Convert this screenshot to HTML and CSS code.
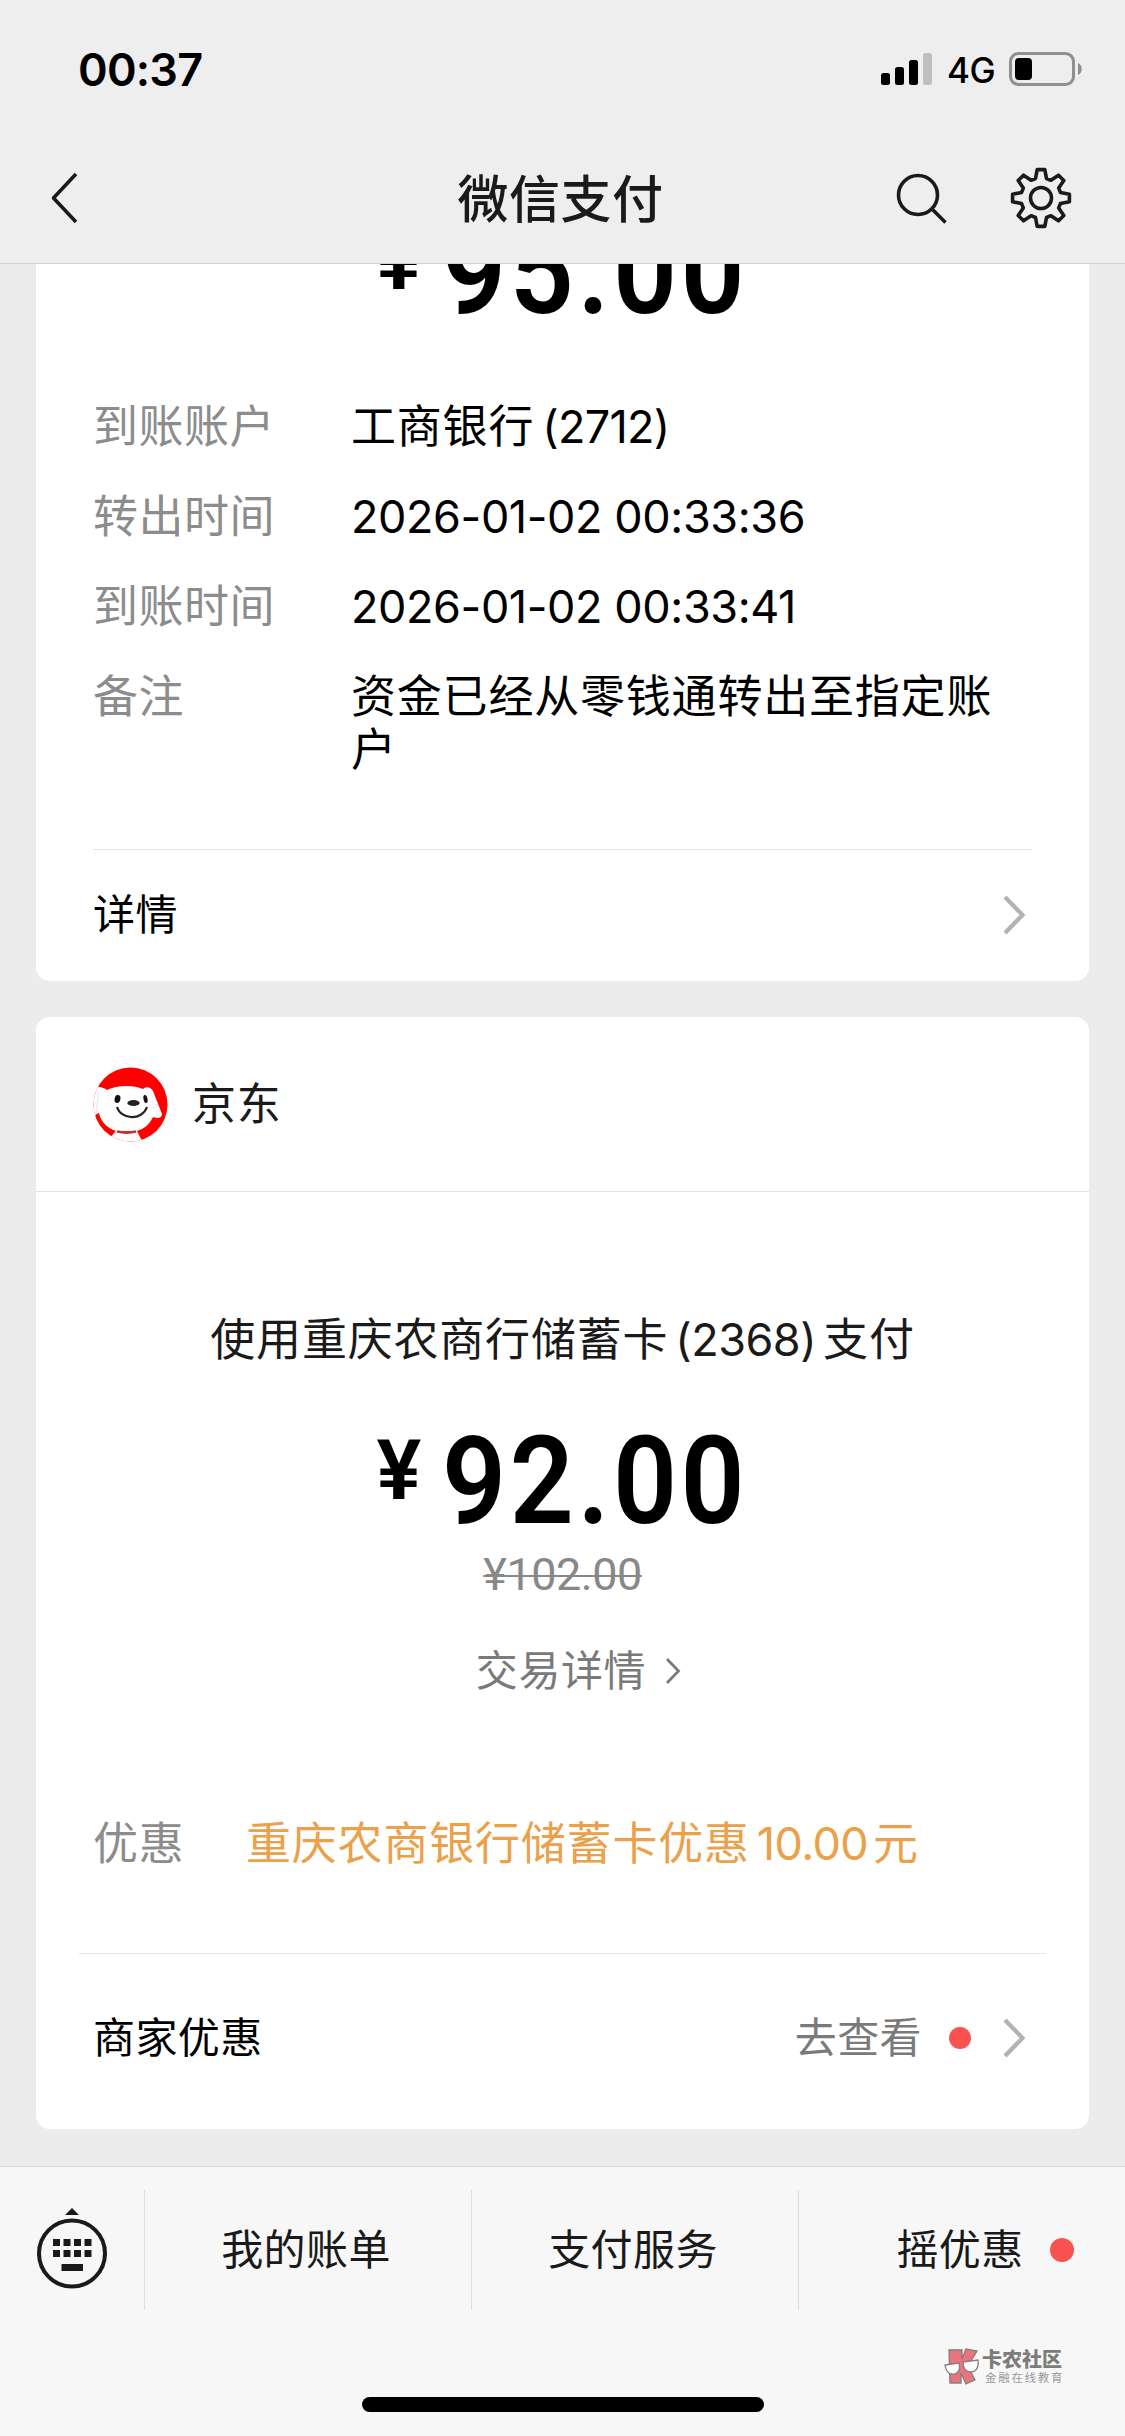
FILE: index.html
```html
<!DOCTYPE html>
<html lang="zh-CN">
<head>
<meta charset="utf-8">
<title>微信支付</title>
<link rel="stylesheet" href="styles.css">
</head>
<body>
<header class="header">
  <div class="status">
    <span class="time">00:37</span>
    <div class="status-icons">
      <svg class="signal" width="52" height="34" viewBox="0 0 52 34"><rect x="0" y="21" width="9" height="12" rx="2.5"/><rect x="14" y="15" width="9" height="18" rx="2.5"/><rect x="28" y="8" width="9" height="25" rx="2.5"/><rect x="42" y="1" width="9" height="32" rx="2.5" fill="#bfbfbf"/></svg>
      <span class="network">4G</span>
      <svg class="battery" width="74" height="34" viewBox="0 0 74 34"><rect x="1.5" y="1.5" width="63" height="31" rx="8" fill="none" stroke="#8f8f8f" stroke-width="3"/><rect x="6" y="6" width="17" height="22" rx="4"/><path d="M69 11c5 2 5 10 0 12z" fill="#8f8f8f"/></svg>
    </div>
  </div>
  <div class="nav">
    <svg class="back" width="30" height="52" viewBox="0 0 30 52"><path d="M27 2L4.500 26L27 50"/></svg>
    <h1 class="title">微信支付</h1>
    <div class="nav-actions">
      <svg width="52" height="62" viewBox="0 0 52 62"><circle cx="22" cy="28" r="19.500"/><path d="M36 42L49.500 55.500"/></svg>
      <svg width="62" height="62" viewBox="-31 -31 62 62"><path d="M-5.500-19.500L-3.800-28.400H3.800L5.500-19.500L9.900-17.700L17.500-22.800L22.800-17.500L17.700-9.900L19.500-5.500L28.400-3.800V3.800L19.500 5.500L17.700 9.900L22.800 17.500L17.500 22.800L9.900 17.700L5.500 19.500L3.800 28.400H-3.800L-5.500 19.500L-9.900 17.700L-17.500 22.800L-22.800 17.500L-17.700 9.900L-19.500 5.500L-28.400 3.800V-3.800L-19.500-5.500L-17.700-9.900L-22.800-17.500L-17.500-22.800L-9.900-17.700Z"/><circle r="10.500"/></svg>
    </div>
  </div>
</header>

<main class="feed">
  <section class="card card-transfer">
    <div class="amount"><span class="yen">¥</span><span class="digits">95.00</span></div>
    <dl class="fields">
      <dt>到账账户</dt><dd>工商银行<span class="num bank-no">(2712)</span></dd>
      <dt>转出时间</dt><dd class="num">2026-01-02 00:33:36</dd>
      <dt>到账时间</dt><dd class="num">2026-01-02 00:33:41</dd>
      <dt>备注</dt><dd>资金已经从零钱通转出至指定账户</dd>
    </dl>
    <div class="link-row detail-row">
      <span>详情</span>
      <svg class="chevron" width="24" height="42" viewBox="0 0 24 42"><path d="M3 3L20.500 21L3 39"/></svg>
    </div>
  </section>

  <section class="card card-pay">
    <div class="merchant">
      <svg width="75" height="75" viewBox="0 0 75 75">
        <defs><clipPath id="disc"><circle cx="37.500" cy="37.500" r="37"/></clipPath></defs>
        <g clip-path="url(#disc)">
          <rect width="75" height="75" fill="#f00"/>
          <path fill="#fff" d="M-1 23C4 18 10 20 14 23C24 18 40 18 50 22C53 19 58 20 60 24L69 47C69 51 65 52 60 50C57 57 51 62 44 64L51 78H13V75L23 64C14 61 8 55 6 46C3 47 1 49 -1 51Z"/>
        </g>
        <path d="M4 24C8 28 2 34 4 46" fill="none" stroke="#eee" stroke-width="1.500"/>
        <ellipse cx="24.500" cy="32" rx="2.900" ry="4" fill="#111" transform="rotate(12 24.500 32)"/>
        <ellipse cx="52.500" cy="32" rx="2" ry="4" fill="#111" transform="rotate(-12 52.500 32)"/>
        <ellipse cx="40.500" cy="36" rx="6.200" ry="3" fill="#222"/>
        <path d="M24 40C28 53 49 54 54 40" fill="none" stroke="#222" stroke-width="2.200"/>
        <path d="M24 64.500Q34 66.500 43 64.500" fill="none" stroke="#c4302b" stroke-width="2.800"/>
      </svg>
      <span>京东</span>
    </div>
    <div class="payment">
      <p class="method">使用重庆农商行储蓄卡<span class="num card-no">(2368)</span>支付</p>
      <div class="amount"><span class="yen">¥</span><span class="digits">92.00</span></div>
      <p class="original">¥102.00</p>
      <p class="more"><span>交易详情</span><svg width="18" height="28" viewBox="0 0 18 28"><path d="M3 2L14.500 14L3 26"/></svg></p>
    </div>
    <div class="discount"><span class="label">优惠</span><span class="promo">重庆农商银行储蓄卡优惠<span class="num sum">10.00</span>元</span></div>
    <div class="link-row offers-row">
      <span>商家优惠</span>
      <div class="view"><span>去查看</span><i class="dot"></i>
      <svg class="chevron" width="24" height="42" viewBox="0 0 24 42"><path d="M3 3L20.500 21L3 39"/></svg></div>
    </div>
  </section>
</main>

<footer class="bar">
  <nav class="menu">
    <div class="keyboard"><svg width="72" height="84" viewBox="0 0 72 84"><path d="M36 1L43 8H29Z"/><circle cx="36" cy="46.500" r="33" fill="none" stroke="#1a1a1a" stroke-width="4"/><path d="M17 32h7v7h-7zM27.500 32h7v7h-7zM38 32h7v7h-7zM48.500 32h7v7h-7zM17 43h7v7h-7zM27.500 43h7v7h-7zM38 43h7v7h-7zM48.500 43h7v7h-7zM25.500 57h21.500v7H25.500z"/></svg></div>
    <a class="item">我的账单</a>
    <a class="item">支付服务</a>
    <a class="item">摇优惠<i class="dot badge"></i></a>
  </nav>
  <div class="home"></div>
  <div class="brand">
    <svg width="36" height="37" viewBox="0 0 36 37"><g stroke="#8b7c7e" stroke-width="1.300"><path fill="#e9747c" d="M5 2H18V11L22 1L33 3L24 18L31 32L22 36L17 25V35H6Z"/><path fill="#fff" d="M1 17L15 15C17 24 12 27 8 26C4 26 2 23 1 17ZM19 14L34 12C35 21 31 24 27 24C22 24 19 21 19 14Z"/></g></svg>
    <div class="brand-text"><strong>卡农社区</strong><small>金融在线教育</small></div>
  </div>
</footer>
</body>
</html>
```
FILE: styles.css
```css
* { box-sizing: border-box; margin: 0; padding: 0; }
body {
  width: 1125px; height: 2436px; overflow: hidden;
  display: flex; flex-direction: column;
  background: #ececec; color: #000;
  font-family: Inter, "Noto Sans CJK SC", sans-serif;
  font-size: 45px; letter-spacing: .8px;
}
svg { display: block; flex: none; }

.header {
  flex: none; height: 264px; background: #eee; border-bottom: 1px solid #d4d4d4;
  display: flex; flex-direction: column;
}
.status { height: 138px; display: flex; justify-content: space-between; align-items: center; padding: 0 42px 0 78px; }
.time { font-size: 45px; font-weight: 600; letter-spacing: -.8px; }
.status-icons { display: flex; align-items: center; }
.network { font-size: 35px; font-weight: 450; letter-spacing: -.6px; margin: 2px 14px 0 14px; line-height: 36px; }
.nav {
  height: 120px; display: grid; grid-template-columns: 1fr auto 1fr; align-items: center;
  padding: 0 53px 0 49px;
}
.nav svg { fill: none; stroke: #1a1a1a; stroke-width: 3.6; stroke-linejoin: round; }
.title { font-size: 51px; font-weight: 500; color: #1a1a1a; letter-spacing: .5px; line-height: 60px; padding-top: 4px; }
.nav-actions { display: flex; gap: 62px; justify-content: flex-end; }

.feed { flex: none; height: 1902px; padding: 0 36px; overflow: hidden; display: flex; flex-direction: column; gap: 36px; }
.card { background: #fff; flex: none; }
.card-transfer { height: 717px; border-radius: 0 0 14px 14px; overflow: hidden; }
.card-pay { height: 1112px; border-radius: 14px; }

.amount {
  display: flex; justify-content: center; align-items: flex-start;
  font-family: Roboto, sans-serif; font-weight: 500; height: 124px; line-height: 124px; letter-spacing: 0;
}
.yen { font-size: 84px; line-height: 102px; font-weight: 600; margin-right: 21px; }
.digits { font-size: 122px; letter-spacing: 3.9px; transform: scaleX(.92); transform-origin: left; margin-right: -27px; font-weight: 600; }
.card-transfer .amount { margin-top: -54px; }

.fields {
  display: grid; grid-template-columns: 258px 1fr; row-gap: 37px;
  line-height: 53px; margin: 66px 57px 0; padding-bottom: 73px; border-bottom: 1px solid #e5e5e5;
}
.fields dt { color: #8c8c8c; letter-spacing: .5px; }
.num { letter-spacing: -.4px; }
.bank-no { margin-left: 8px; letter-spacing: -.7px; }

.link-row { display: flex; justify-content: space-between; align-items: center; font-size: 42px; line-height: 50px; letter-spacing: .4px; }
.detail-row { height: 130px; padding: 0 63px 0 57px; }
.chevron { fill: none; stroke: #b2b2b2; stroke-width: 4.2; }

.merchant { height: 175px; padding: 0 57px; display: flex; align-items: center; gap: 24px; border-bottom: 1px solid #e5e5e5; font-size: 44px; line-height: 50px; color: #1a1a1a; }
.payment { display: flex; flex-direction: column; align-items: center; padding-top: 121px; }
.method { line-height: 53px; color: #1a1a1a; white-space: nowrap; }
.card-no { margin: 0 7px; letter-spacing: -.5px; }
.card-pay .amount { margin-top: 54px; }
.original { font-family: Roboto, sans-serif; font-size: 45px; line-height: 52px; letter-spacing: -.5px; color: #888; text-decoration: line-through; text-decoration-thickness: 2px; margin-top: 5px; }
.more { display: flex; align-items: center; gap: 18px; font-size: 42px; line-height: 50px; letter-spacing: .6px; color: #7a7a7a; margin: 45px 0 0 33px; }
.more svg { fill: none; stroke: #7a7a7a; stroke-width: 2.8; }
.discount { display: flex; margin: 121px 43px 0; padding: 0 14px 83px; line-height: 53px; border-bottom: 1px solid #e5e5e5; white-space: nowrap; }
.label { width: 153px; color: #8c8c8c; }
.promo { color: #eba04a; }
.sum { margin: 0 5px 0 7px; letter-spacing: -.6px; }
.offers-row { height: 168px; padding: 0 63px 0 57px; }
.view { display: flex; align-items: center; color: #7a7a7a; }
.dot { display: block; width: 22px; height: 22px; border-radius: 50%; background: #fa5151; margin: 0 31px 0 27px; }

.bar { flex: none; height: 270px; background: #f7f7f7; border-top: 1px solid #d9d9d9; position: relative; display: flex; flex-direction: column; align-items: center; }
.menu { width: 100%; height: 120px; margin-top: 23px; display: grid; grid-template-columns: 144px 327px 327px 327px; font-size: 42px; line-height: 50px; letter-spacing: .4px; color: #1a1a1a; }
.keyboard { display: flex; align-items: center; justify-content: center; fill: #1a1a1a; }
.keyboard svg { margin-bottom: 3px; }
.item { border-left: 1px solid #dcdcdc; display: flex; align-items: center; justify-content: center; position: relative; padding: 0 4px 0 0; }
.badge { position: absolute; left: 251px; top: 48px; width: 24px; height: 24px; margin: 0; }
.home { width: 402px; height: 15px; border-radius: 8px; background: #000; margin-top: 87px; }
.brand { position: absolute; left: 944px; top: 181px; display: flex; gap: 2px; color: #7c7c7c; }
.brand-text { display: flex; flex-direction: column; white-space: nowrap; }
.brand strong { font-size: 20px; line-height: 24px; font-weight: 900; letter-spacing: 0; }
.brand small { font-size: 11.5px; line-height: 12px; letter-spacing: 1.7px; margin-left: 3px; color: #999; }
```
